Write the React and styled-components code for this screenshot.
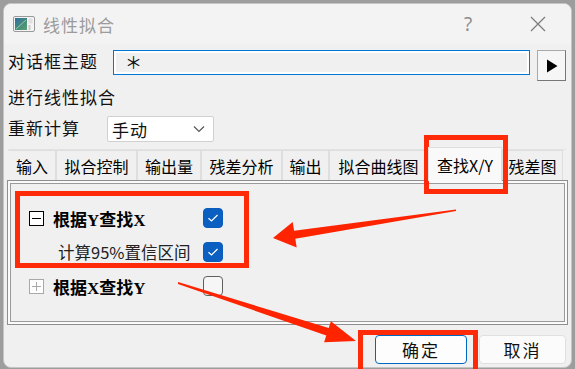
import React from "react";
import styled, { createGlobalStyle } from "styled-components";

const GlobalStyle = createGlobalStyle`
	body {
		margin: 0;
		background: #9d9d9d;
		font-family: "Noto Sans CJK SC", "Noto Sans", sans-serif;
	}
`;

const Page = styled.div`
	position: relative;
	width: 575px;
	height: 369px;
	padding: 3px 0 0 3px;
	box-sizing: border-box;
	overflow: hidden;
`;

const Window = styled.div`
	width: 569px;
	height: 365px;
	box-sizing: border-box;
	border: 1px solid #c4c4c4;
	border-radius: 8px;
	background: #f0f0f0;
	display: flex;
	flex-direction: column;
	overflow: hidden;
`;

const TitleBar = styled.div`
	height: 40px;
	flex-shrink: 0;
	background: #f3f3f3;
	display: flex;
	align-items: center;
	padding: 0 10px 0 9px;
`;

const TitleText = styled.span`
	margin-left: 8px;
	font-size: 17px;
	letter-spacing: 1px;
	color: #9b9b9b;
	flex: 1;
`;

const TitleButton = styled.div`
	width: 46px;
	height: 40px;
	display: flex;
	align-items: center;
	justify-content: center;
	color: #8e8e8e;
	font-family: "Noto Sans", sans-serif;
	font-size: 19px;
	margin-left: ${({ gap }) => gap || 0}px;
`;

const Body = styled.div`
	padding: 6px 5px 0 4px;
	display: flex;
	flex-direction: column;
`;

const Row = styled.div`
	display: flex;
	align-items: flex-start;
	margin-top: ${({ top }) => top || 0}px;
`;

const Label = styled.div`
	width: ${({ w }) => w}px;
	flex-shrink: 0;
	font-size: 17px;
	letter-spacing: 1px;
	line-height: ${({ lh }) => lh || 24}px;
	color: #111;
`;

const Input = styled.div`
	width: 417px;
	height: 25px;
	box-sizing: border-box;
	border: 1px solid #0078d7;
	box-shadow: inset 0 0 0 2px #ffffff;
	background: #f0f0f0;
	padding-left: 11px;
	font-size: 17px;
	line-height: 22px;
	color: #111;
`;

const ArrowButton = styled.div`
	width: 29px;
	height: 31px;
	margin-left: 7px;
	box-sizing: border-box;
	border: 1px solid #a9a9a9;
	border-right-color: #777;
	border-bottom-color: #777;
	background: #f6f6f6;
	display: flex;
	align-items: center;
	justify-content: center;
`;

const Combo = styled.div`
	width: 107px;
	height: 26px;
	box-sizing: border-box;
	border: 1px solid #d0d0d0;
	border-radius: 2px;
	background: #ffffff;
	display: flex;
	align-items: center;
	justify-content: space-between;
	padding: 0 8px 0 4px;
	font-size: 17px;
	letter-spacing: 1px;
	color: #111;
`;

const TabStrip = styled.div`
	display: flex;
	align-items: flex-end;
	height: 30px;
	border-top: 1px solid #e2e2e2;
	margin-top: 7px;
`;

const Tab = styled.div`
	width: ${({ w }) => w}px;
	height: ${({ active }) => (active ? 34 : 30)}px;
	margin-bottom: ${({ active }) => (active ? -1 : 0)}px;
	box-sizing: border-box;
	border: 1px solid #dedede;
	border-bottom: none;
	border-left-color: ${({ first }) => (first ? "#f0f0f0" : "#dedede")};
	background: ${({ active }) => (active ? "#f9f9f9" : "#f0f0f0")};
	position: relative;
	z-index: ${({ active }) => (active ? 1 : 0)};
	display: flex;
	align-items: center;
	justify-content: center;
	font-size: 16px;
	color: #000;
	white-space: nowrap;
	padding-top: ${({ active }) => (active ? 1 : 0)}px;
`;

const Panel = styled.div`
	height: 145px;
	margin: 0 -2px 0 -1px;
	box-sizing: border-box;
	border: 1px solid #8e8e8e;
	box-shadow: inset 0 0 0 2px #fafafa, inset 0 0 0 3px #9a9a9a;
	padding: 20px 0 0 21px;
	display: grid;
	grid-template-columns: 15px 141px 20px;
	grid-auto-rows: 34px;
	column-gap: 9px;
	align-content: start;
	align-items: center;
`;

const Toggle = styled.div`
	width: 15px;
	height: 15px;
	box-sizing: border-box;
	border: 1px solid ${({ open }) => (open ? "#000" : "#a8a8a8")};
	background: #fff;
	position: relative;

	&::before {
		content: "";
		position: absolute;
		left: 2px;
		right: 2px;
		top: 6px;
		height: 1px;
		background: ${({ open }) => (open ? "#000" : "#a8a8a8")};
	}

	&::after {
		content: "";
		display: ${({ open }) => (open ? "none" : "block")};
		position: absolute;
		top: 2px;
		bottom: 2px;
		left: 6px;
		width: 1px;
		background: #a8a8a8;
	}
`;

const ItemLabel = styled.div`
	font-family: "Liberation Serif", "Noto Sans CJK SC", serif;
	font-size: 17px;
	font-weight: ${({ bold }) => (bold ? 700 : 400)};
	color: ${({ bold }) => (bold ? "#000" : "#222")};
	padding-left: ${({ indent }) => indent || 0}px;
	white-space: nowrap;
`;

const SubLabel = styled(ItemLabel)`
	font-family: "Noto Sans CJK SC", sans-serif;
	font-size: 16.5px;
	font-weight: 400;
`;

const Check = styled.div`
	width: 20px;
	height: 20px;
	box-sizing: border-box;
	border-radius: 4px;
	border: 1px solid ${({ on }) => (on ? "#0a5dbd" : "#5f5f5f")};
	background: ${({ on }) => (on ? "#0b5fc0" : "#f6f6f6")};
	display: flex;
	align-items: center;
	justify-content: center;
`;

const Footer = styled.div`
	display: flex;
	justify-content: flex-end;
	gap: 12px;
	margin-top: 10px;
`;

const Button = styled.div`
	width: ${({ w }) => w}px;
	height: 29px;
	box-sizing: border-box;
	border-radius: 4px;
	border: 1px solid ${({ primary }) => (primary ? "#0067c0" : "#e0e0e0")};
	background: ${({ primary }) => (primary ? "#fdfdfd" : "#fbfbfb")};
	display: flex;
	align-items: center;
	justify-content: center;
	font-family: "Noto Sans CJK SC", sans-serif;
	font-weight: 400;
	font-size: 17px;
	letter-spacing: 2px;
	color: #111;
`;

const Overlay = styled.svg`
	position: absolute;
	left: 0;
	top: 0;
	pointer-events: none;
`;

const tabs = [
	["输入", 48],
	["拟合控制", 81],
	["输出量", 64],
	["残差分析", 81],
	["输出", 47],
	["拟合曲线图", 99],
	["查找X/Y", 74],
	["残差图", 61],
];

const AppIcon = () => (
	<svg width="22" height="16" viewBox="0 0 22 16">
		<defs>
			<linearGradient id="ig" x1="0" y1="0" x2="1" y2="1">
				<stop offset="0" stopColor="#2f6d9e" />
				<stop offset="1" stopColor="#5aa26a" />
			</linearGradient>
		</defs>
		<rect x="0.5" y="0.5" width="21" height="15" rx="1.5" fill="#f4f4f4" stroke="#9a9a9a" />
		<rect x="2" y="2" width="12" height="12" fill="url(#ig)" />
		<path d="M3 13 L13 4" stroke="#8fd08f" strokeWidth="1" />
		<rect x="15.5" y="2.5" width="4" height="5" fill="#e0e0e0" />
		<rect x="15.5" y="9" width="2" height="5" fill="#c9c9c9" />
	</svg>
);

const Tick = () => (
	<svg width="12" height="10" viewBox="0 0 12 10">
		<path d="M1.5 5.2 L4.5 8 L10.5 2" fill="none" stroke="#fff" strokeWidth="1.2" />
	</svg>
);

export default function App() {
	return (
		<Page>
			<GlobalStyle />
			<Window>
				<TitleBar>
					<AppIcon />
					<TitleText>线性拟合</TitleText>
					<TitleButton>?</TitleButton>
					<TitleButton gap={24}>
						<svg width="16" height="16" viewBox="0 0 16 16">
							<path d="M1 1 L15 15 M15 1 L1 15" stroke="#7d7d7d" strokeWidth="1.3" />
						</svg>
					</TitleButton>
				</TitleBar>
				<Body>
					<Row>
						<Label w={105} lh={22}>对话框主题</Label>
						<Input>＊</Input>
						<ArrowButton>
							<svg width="12" height="14" viewBox="0 0 12 14">
								<path d="M1 0.5 L11.5 7 L1 13.5 Z" fill="#000" />
							</svg>
						</ArrowButton>
					</Row>
					<Row top={4}>
						<Label w={200}>进行线性拟合</Label>
					</Row>
					<Row top={7}>
						<Label w={99} lh={24}>重新计算</Label>
						<Combo>
							手动
							<svg width="12" height="8" viewBox="0 0 12 8">
								<path d="M1 1.5 L6 6.5 L11 1.5" fill="none" stroke="#555" strokeWidth="1.2" />
							</svg>
						</Combo>
					</Row>
					<TabStrip>
						{tabs.map(([name, w], i) => (
							<Tab key={name} w={w} first={i === 0} active={name === "查找X/Y"}>
								{name}
							</Tab>
						))}
					</TabStrip>
					<Panel>
						<Toggle open />
						<ItemLabel bold>根据Y查找X</ItemLabel>
						<Check on>
							<Tick />
						</Check>
						<span />
						<SubLabel indent={5}>计算95%置信区间</SubLabel>
						<Check on>
							<Tick />
						</Check>
						<Toggle />
						<ItemLabel bold>根据X查找Y</ItemLabel>
						<Check />
					</Panel>
					<Footer>
						<Button primary w={92}>确定</Button>
						<Button w={87}>取消</Button>
					</Footer>
				</Body>
			</Window>
			<Overlay width="575" height="369" viewBox="0 0 575 369">
				<g fill="none" stroke="#ff2400" strokeWidth="5" opacity="0.97">
					<rect x="17.5" y="193.5" width="229" height="72" />
					<rect x="426.5" y="137.5" width="79" height="54" />
					<rect x="360.5" y="332.5" width="115" height="45" />
				</g>
				<g fill="#ff2400">
					<polygon points="273,238 292.7,221.9 294.1,230.7 456,209.5 456,211 295.3,238.7 296.7,247.6" />
					<polygon points="356,341 330.9,321.2 328.7,327.9 178,282 178,284 326.3,335.5 324.1,342.2" />
				</g>
			</Overlay>
		</Page>
	);
}
